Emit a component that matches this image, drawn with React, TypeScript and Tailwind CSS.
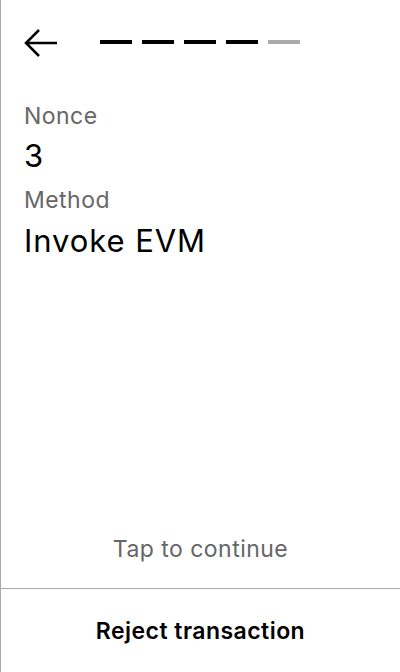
import React from "react";

export default function App() {
  const dashes = [true, true, true, true, false];
  return (
    <div
      className="w-[400px] h-[672px] bg-white border-l border-[#aaaaaa] flex flex-col text-black"
      style={{ fontFamily: "Inter, 'Noto Sans', sans-serif" }}
    >
      <div className="flex items-center h-[28px] mt-[29px] pl-[22px]">
        <svg width="36" height="30" viewBox="0 0 36 30" fill="none" className="shrink-0">
          <path d="M3 15 H34 M16 2 L3 15 L16 28" stroke="#000" strokeWidth="2.5" strokeLinecap="butt" strokeLinejoin="miter" />
        </svg>
        <div className="flex gap-[10px] ml-[41px] -mt-[2px]">
          {dashes.map((on, i) => (
            <div key={i} className={on ? "w-[32px] h-[4px] bg-black" : "w-[32px] h-[4px] bg-[#aaaaaa]"} />
          ))}
        </div>
      </div>
      <div className="px-[23px] mt-[45px] flex flex-col">
        <div className="text-[23px] leading-[28px] tracking-[0.02em] text-[#666666]">Nonce</div>
        <div className="text-[31px] leading-[40px] tracking-[0.03em] mt-[6px]">3</div>
        <div className="text-[23px] leading-[28px] tracking-[0.02em] text-[#666666] mt-[10px]">Method</div>
        <div className="text-[31px] leading-[40px] tracking-[0.03em] mt-[7px]">Invoke EVM</div>
      </div>
      <div className="flex-1" />
      <div className="text-center text-[23px] leading-[28px] tracking-[0.02em] text-[#666666] mb-[25px]">Tap to continue</div>
      <div className="border-t border-[#aaaaaa] h-[84px] flex items-center justify-center">
        <span className="text-[23px] leading-[28px] tracking-[0.02em] font-semibold">Reject transaction</span>
      </div>
    </div>
  );
}
